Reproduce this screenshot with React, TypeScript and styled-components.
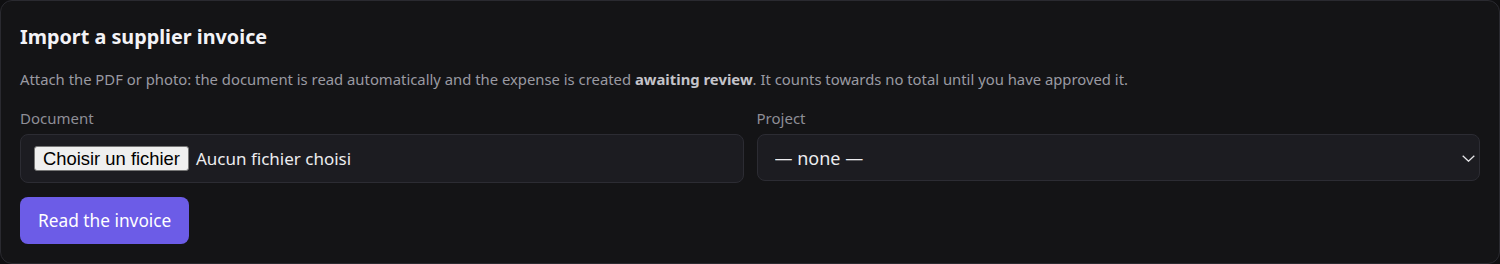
import * as React from "react";
import styled, { createGlobalStyle } from "styled-components";

const GlobalStyle = createGlobalStyle`
  html, body {
    margin: 0;
    padding: 0;
    background: #0f0f11;
  }
  body {
    font-family: "Noto Sans", "Open Sans", sans-serif;
  }
  * {
    box-sizing: border-box;
  }
`;

const Card = styled.section`
  width: 1500px;
  height: 264px;
  padding: 23px 19px 19px;
  background: #141416;
  border: 1px solid #2a2a30;
  border-radius: 12px;
  display: flex;
  flex-direction: column;
`;

const Title = styled.h2`
  margin: 0;
  font-size: 19.8px;
  line-height: 26px;
  font-weight: 700;
  color: #f3f3f6;
`;

const Description = styled.p`
  margin: 18px 0 0;
  font-size: 14.83px;
  line-height: 22px;
  color: #9a9aa2;

  strong {
    color: #c4c4ca;
    font-weight: 700;
  }
`;

const FieldRow = styled.div`
  display: grid;
  grid-template-columns: 1fr 1fr;
  gap: 13px;
  margin-top: 18px;
  align-items: start;
`;

const Field = styled.label`
  display: flex;
  flex-direction: column;
  gap: 6px;
`;

const FieldLabel = styled.span`
  font-size: 15px;
  line-height: 20px;
  color: #8e8e96;
`;

const FileBox = styled.span`
  display: flex;
  align-items: center;
  gap: 7px;
  padding: 11px 13px;
  background: #1c1c21;
  border: 1px solid #2c2c33;
  border-radius: 8px;
`;

const HiddenInput = styled.input`
  display: none;
`;

const FileButton = styled.span`
  display: inline-flex;
  align-items: center;
  height: 25px;
  padding: 0 8px;
  background: #efefef;
  border: 1px solid #767676;
  border-radius: 3px;
  font-family: "Liberation Sans", Arial, sans-serif;
  font-size: 18.4px;
  color: #000;
`;

const FileName = styled.span`
  font-size: 17px;
  color: #ececef;
`;

const SelectWrap = styled.span`
  position: relative;
  display: block;
`;

const Select = styled.select`
  width: 100%;
  height: 47px;
  padding: 0 40px 0 17px;
  appearance: none;
  background: #1c1c21;
  border: 1px solid #2c2c33;
  border-radius: 8px;
  font-family: "Noto Sans", sans-serif;
  font-size: 18px;
  color: #ececef;
  outline: none;
`;

const Chevron = styled.svg`
  position: absolute;
  right: 5px;
  top: 21px;
  width: 13px;
  height: 7px;
  pointer-events: none;
`;

const SubmitButton = styled.button`
  align-self: flex-start;
  margin-top: 14px;
  height: 47px;
  padding: 0 18px;
  background: #6c5ce7;
  border: none;
  border-radius: 8px;
  font-family: "Noto Sans", sans-serif;
  font-size: 17.3px;
  color: #ffffff;
  cursor: pointer;
`;

export default function App() {
  const [fileName, setFileName] = React.useState<string | null>(null);

  return (
    <>
      <GlobalStyle />
      <Card>
        <Title>Import a supplier invoice</Title>
        <Description>
          Attach the PDF or photo: the document is read automatically and the expense is created{" "}
          <strong>awaiting review</strong>. It counts towards no total until you have approved it.
        </Description>
        <FieldRow>
          <Field>
            <FieldLabel>Document</FieldLabel>
            <FileBox>
              <HiddenInput
                type="file"
                accept="application/pdf,image/*"
                onChange={(e) => setFileName(e.target.files?.[0]?.name ?? null)}
              />
              <FileButton>Choisir un fichier</FileButton>
              <FileName>{fileName ?? "Aucun fichier choisi"}</FileName>
            </FileBox>
          </Field>
          <Field>
            <FieldLabel>Project</FieldLabel>
            <SelectWrap>
              <Select defaultValue="">
                <option value="">— none —</option>
              </Select>
              <Chevron viewBox="0 0 13 7" fill="none">
                <path d="M0.7 0.7 L6.5 6.2 L12.3 0.7" stroke="#e6e6e9" strokeWidth="1.3" />
              </Chevron>
            </SelectWrap>
          </Field>
        </FieldRow>
        <SubmitButton type="button">Read the invoice</SubmitButton>
      </Card>
    </>
  );
}
